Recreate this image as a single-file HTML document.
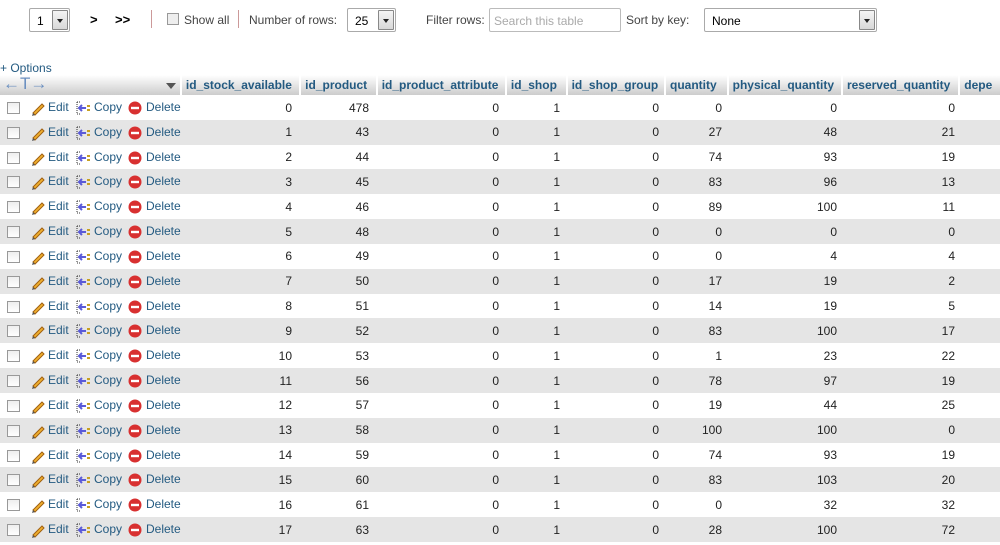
<!DOCTYPE html>
<html><head><meta charset="utf-8"><style>
*{margin:0;padding:0;box-sizing:border-box}
body{width:1000px;height:545px;overflow:hidden;background:#fff;font-family:"Liberation Sans",Arial,sans-serif;font-size:12px;color:#000;position:relative}
.a{position:absolute;white-space:nowrap}
.sel{position:absolute;border:1px solid #aaa;border-radius:2px;background:#fff;height:24px;font-size:12px;padding:5px 0 0 7px}
.sel b{position:absolute;right:1px;top:1px;width:16px;height:20px;background:linear-gradient(#f4f4f4,#d8d8d8);border:1px solid #888;border-radius:1px}
.sel b:after{content:"";position:absolute;left:4px;top:8px;border-left:3px solid transparent;border-right:3px solid transparent;border-top:4px solid #222}
.lbl{color:#444;font-size:12px}
.hdr{position:absolute;top:75px;left:0;height:20px;width:1000px;display:flex;background:linear-gradient(#fff,#ccc)}
.hdr div{height:20px;border-right:2px solid #fff;color:#235a81;font-weight:bold;font-size:12px;padding:3px 0 0 4px;white-space:nowrap;overflow:hidden}
.row{position:absolute;left:0;width:1000px;height:25px;display:flex;align-items:center}
.row.g{background:#e5e5e5}
.row div{text-align:right;padding-right:11px;color:#222;font-size:12px}
.ac{width:183px;text-align:left!important;padding:0!important;position:relative;height:25px}
.ac span{position:absolute;top:5px;color:#235a81}
.cb{position:absolute;left:7px;top:7px;width:12px;height:12px;border:1px solid #999;background:linear-gradient(#eee,#fff)}
</style></head><body>
<div class="sel" style="left:29px;top:8px;width:41px">1<b></b></div>
<div class="a" style="left:90px;top:12px;font-weight:bold;font-size:13px">&gt;</div>
<div class="a" style="left:115px;top:12px;font-weight:bold;font-size:13px">&gt;&gt;</div>
<div class="a" style="left:151px;top:10px;width:1px;height:18px;background:#c99"></div>
<div class="a" style="left:167px;top:13px;width:12px;height:12px;border:1px solid #999;background:#eee"></div>
<div class="a lbl" style="left:184px;top:13px">Show all</div>
<div class="a" style="left:238px;top:10px;width:1px;height:18px;background:#c99"></div>
<div class="a lbl" style="left:249px;top:13px">Number of rows:</div>
<div class="sel" style="left:347px;top:8px;width:49px">25<b></b></div>
<div class="a lbl" style="left:426px;top:13px">Filter rows:</div>
<div class="a" style="left:489px;top:8px;width:132px;height:24px;border:1px solid #bbb;border-radius:2px;color:#aaa;padding:5px 0 0 4px">Search this table</div>
<div class="a lbl" style="left:626px;top:13px">Sort by key:</div>
<div class="sel" style="left:704px;top:8px;width:173px">None<b></b></div>
<div class="a" style="left:0;top:61px;color:#235a81">+ Options</div>
<div class="hdr">
<div style="width:183px;position:relative;color:#6a8fc0;font-weight:normal;padding:0 0 0 3px;font-size:17px;line-height:18px">←T→<span style="position:absolute;left:166px;top:8px;border-left:5px solid transparent;border-right:5px solid transparent;border-top:6px solid #555"></span></div>
<div style="width:120px">id_stock_available</div><div style="width:77px">id_product</div><div style="width:130px">id_product_attribute</div><div style="width:61px">id_shop</div><div style="width:99px">id_shop_group</div><div style="width:63px">quantity</div><div style="width:115px">physical_quantity</div><div style="width:118px">reserved_quantity</div><div style="width:40px;border:0">depe</div>
</div>
<div id="rows"></div>
<script>
var d=[[0,478,0,0,0],[1,43,27,48,21],[2,44,74,93,19],[3,45,83,96,13],[4,46,89,100,11],[5,48,0,0,0],[6,49,0,4,4],[7,50,17,19,2],[8,51,14,19,5],[9,52,83,100,17],[10,53,1,23,22],[11,56,78,97,19],[12,57,19,44,25],[13,58,100,100,0],[14,59,74,93,19],[15,60,83,103,20],[16,61,0,32,32],[17,63,28,100,72]];
var h='';
var pen='<svg width="16" height="16" style="position:absolute;left:30px;top:5px" viewBox="0 0 16 16"><path d="M3 13 L12 4 L14 6 L5 15 Z" fill="#f0b030" stroke="#a06010" stroke-width="1"/><path d="M3 13 L2 16 L5 15Z" fill="#555"/></svg>';
var cp='<svg width="16" height="16" style="position:absolute;left:75px;top:5px" viewBox="0 0 16 16"><path d="M2 2h4M2 14h4M2 2v12" stroke="#333" stroke-dasharray="1 1" fill="none"/><path d="M4 8h7M7 5l-3 3 3 3" stroke="#5a5ad8" stroke-width="2" fill="none"/><rect x="12" y="5" width="3" height="2" fill="#c8a020"/><rect x="12" y="9" width="3" height="2" fill="#c8a020"/></svg>';
var dl='<svg width="14" height="14" style="position:absolute;left:128px;top:6px" viewBox="0 0 14 14"><circle cx="7" cy="7" r="6.5" fill="#d83030"/><rect x="3" y="5.8" width="8" height="2.4" fill="#fff"/></svg>';
for(var i=0;i<d.length;i++){var r=d[i];
h+='<div class="row'+(i%2?' g':'')+'" style="top:'+(95+i*24.83)+'px"><div class="ac"><div class="cb"></div>'+pen+'<span style="left:48px">Edit</span>'+cp+'<span style="left:94px">Copy</span>'+dl+'<span style="left:146px">Delete</span></div>'+
'<div style="width:120px">'+r[0]+'</div><div style="width:77px">'+r[1]+'</div><div style="width:130px">0</div><div style="width:61px">1</div><div style="width:99px">0</div><div style="width:63px">'+r[2]+'</div><div style="width:115px">'+r[3]+'</div><div style="width:118px">'+r[4]+'</div></div>';}
document.getElementById('rows').innerHTML=h;
</script>
</body></html>
